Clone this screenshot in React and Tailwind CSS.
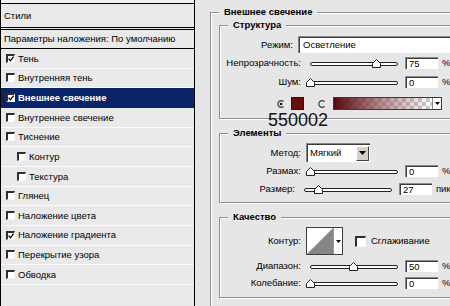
import React from "react";

const layers = [
  { name: "Тень", checked: true },
  { name: "Внутренняя тень" },
  { name: "Внешнее свечение", checked: true, active: true },
  { name: "Внутреннее свечение" },
  { name: "Тиснение" },
  { name: "Контур", sub: true },
  { name: "Текстура", sub: true },
  { name: "Глянец" },
  { name: "Наложение цвета" },
  { name: "Наложение градиента", checked: true },
  { name: "Перекрытие узора" },
  { name: "Обводка" },
];

function CheckBox({ checked, className = "w-[9px] h-[9px]" }) {
  return (
    <span
      className={`flex shrink-0 bg-white border-t-2 border-l-2 border-t-[#2e2e2e] border-l-[#2e2e2e] border-b border-r border-b-[#f6f6f6] border-r-[#f6f6f6] ${className}`}
    >
      {checked && (
        <svg viewBox="0 0 6 6" className="w-full h-full">
          <path d="M0.6 2.6 L2.4 4.8 L5.6 0.6" fill="none" stroke="#000" strokeWidth="1.3" />
        </svg>
      )}
    </span>
  );
}

function LayerList() {
  return (
    <div className="w-[195px] h-full shrink-0 flex flex-col bg-[#e9e9e9] border-l border-r border-black">
      <div className="h-[3px] bg-[#f2f2f2]" />
      <div className="h-[25px] border-y border-black flex items-center pl-[3px]">Стили</div>
      <div className="h-[1px]" />
      <div className="h-[20px] border-y border-black flex items-center pl-[3px] whitespace-nowrap">
        Параметры наложения: По умолчанию
      </div>
      {layers.map((l) => (
        <div
          key={l.name}
          className={`h-[19.67px] shrink-0 flex items-center border-b whitespace-nowrap ${
            l.active ? "bg-[#0a246a] border-[#0a246a] text-white font-bold" : "border-[#fbfbfb]"
          } ${l.sub ? "pl-[16px]" : "pl-[5px]"}`}
        >
          <CheckBox checked={l.checked} />
          <span className="ml-[3px]">{l.name}</span>
        </div>
      ))}
    </div>
  );
}

function Group({ title, className, children }) {
  return (
    <div
      className={`relative shrink-0 flex flex-col border border-[#8e8e8e] shadow-[inset_1px_1px_0_#fff,1px_1px_0_#fff] ${className}`}
    >
      <span className="absolute top-[-7px] left-[8px] px-[5px] h-[12px] leading-[12px] bg-[#e6e6e6] font-bold whitespace-nowrap">
        {title}
      </span>
      {children}
    </div>
  );
}

function Row({ label, className, children }) {
  return (
    <div className={`flex items-center shrink-0 whitespace-nowrap ${className}`}>
      <span className="w-[81px] text-right">{label}</span>
      <div className="ml-[5px] flex items-center">{children}</div>
    </div>
  );
}

function Slider({ pos }) {
  return (
    <svg width="99" height="12" className="shrink-0 block">
      <rect x="4.5" y="5.5" width="87" height="3" rx="1.5" fill="#fff" stroke="#222" />
      <path d={`M${pos} 2.5 l4 4 v4 h-8 v-4 z`} fill="#fff" stroke="#222" />
    </svg>
  );
}

function NumBox({ value }) {
  return (
    <div className="w-[33px] h-[12px] shrink-0 flex items-center pl-[3px] bg-white border-t border-l border-[#8a8a8a] shadow-[inset_1px_1px_0_#3c3c3c]">
      {value}
    </div>
  );
}

function Radio({ on }) {
  return (
    <svg width="8" height="8" viewBox="0 0 8 8" className="shrink-0 block">
      <path d="M6.6 1.6 A3.4 3.4 0 1 0 6.6 6.4" fill="none" stroke="#3a3a3a" strokeWidth="1.2" />
      {on && <circle cx="4" cy="4" r="1.3" fill="#000" />}
    </svg>
  );
}

function SliderRow({ label, pos, value, unit = "%", className }) {
  return (
    <Row label={label} className={`h-[12px] ${className}`}>
      <Slider pos={pos} />
      <NumBox value={value} />
      <span className="ml-[4px]">{unit}</span>
    </Row>
  );
}

export default function App() {
  return (
    <div className="w-[450px] h-[306px] flex overflow-hidden bg-[#e6e6e6] text-[9.5px] text-black font-['Liberation_Sans',Arial,sans-serif] leading-none">
      <LayerList />
      <div className="relative flex-1 min-w-0 h-full overflow-hidden bg-[#e6e6e6]">
        <Group title="Внешнее свечение" className="ml-[15px] mt-[12px] w-[260px] h-[300px] pl-[8px] pt-[12px]">
          <Group title="Структура" className="w-[240px] h-[94px]">
            <Row label="Режим:" className="mt-[10px] h-[17px]">
              <div className="w-[160px] h-[17px] flex items-center pl-[4px] bg-white border-t border-l border-[#8a8a8a] shadow-[inset_1px_1px_0_#3c3c3c]">
                Осветление
              </div>
            </Row>
            <SliderRow label="Непрозрачность:" pos={70.5} value="75" className="mt-[4px]" />
            <SliderRow label="Шум:" pos={4.5} value="0" className="mt-[7px]" />
            <div className="mt-[9px] h-[13px] flex items-center pl-[57px]">
              <Radio on />
              <div className="ml-[6px] w-[13px] h-[13px] shrink-0 bg-[#6b0b0b] border border-[#420707]" />
              <div className="ml-[14px]">
                <Radio />
              </div>
              <div className="ml-[7px] w-[109px] h-[13px] shrink-0 flex border border-[#3a3a3a]">
                <div className="flex-1 bg-[repeating-conic-gradient(#cdcdcd_0%_25%,#ffffff_0%_50%)] bg-[length:8px_8px]">
                  <div className="h-full bg-linear-to-r from-[#560812] via-[#8a4a4e]/60 to-transparent" />
                </div>
                <div className="w-[9px] bg-white border-l border-[#8a8a8a] flex items-center justify-center">
                  <svg width="5" height="3" className="block">
                    <path d="M0 0h5l-2.5 3z" fill="#000" />
                  </svg>
                </div>
              </div>
            </div>
          </Group>

          <Group title="Элементы" className="mt-[14px] w-[240px] h-[70px]">
            <Row label="Метод:" className="mt-[9px] h-[19px]">
              <div className="w-[64px] h-[19px] flex items-center bg-white border-t border-l border-[#8a8a8a] shadow-[inset_1px_1px_0_#3c3c3c]">
                <span className="flex-1 pl-[3px]">Мягкий</span>
                <div className="w-[13px] h-[15px] mr-[1px] flex items-center justify-center bg-[#d4d0c8] border-t border-l border-white border-b border-r border-b-[#404040] border-r-[#404040]">
                  <svg width="7" height="4" className="block">
                    <path d="M0 0h7l-3.5 4z" fill="#000" />
                  </svg>
                </div>
              </div>
            </Row>
            <SliderRow label="Размах:" pos={4.5} value="0" className="mt-[3px]" />
            <SliderRow label="Размер:" pos={18.5} value="27" unit="пикс." className="mt-[6px]" />
          </Group>

          <Group title="Качество" className="mt-[14px] w-[240px] h-[81px]">
            <Row label="Контур:" className="mt-[9px] h-[28px]">
              <div className="w-[37px] h-[28px] shrink-0 flex bg-white border border-[#3c3c3c]">
                <svg width="26" height="26" className="block shrink-0">
                  <path d="M0 26 L26 0 L26 26 Z" fill="#868686" />
                </svg>
                <div className="flex-1 flex items-center justify-center border-l border-[#9a9a9a]">
                  <svg width="5" height="3" className="block">
                    <path d="M0 0h5l-2.5 3z" fill="#000" />
                  </svg>
                </div>
              </div>
              <CheckBox className="ml-[12px] w-[11px] h-[11px]" />
              <span className="ml-[5px]">Сглаживание</span>
            </Row>
            <SliderRow label="Диапазон:" pos={47.5} value="50" className="mt-[5px]" />
            <SliderRow label="Колебание:" pos={4.5} value="0" className="mt-[5px]" />
          </Group>
        </Group>

        <span className="absolute left-[73px] top-[114px] text-[18px] leading-[13px] text-[#111]">550002</span>
      </div>
    </div>
  );
}
